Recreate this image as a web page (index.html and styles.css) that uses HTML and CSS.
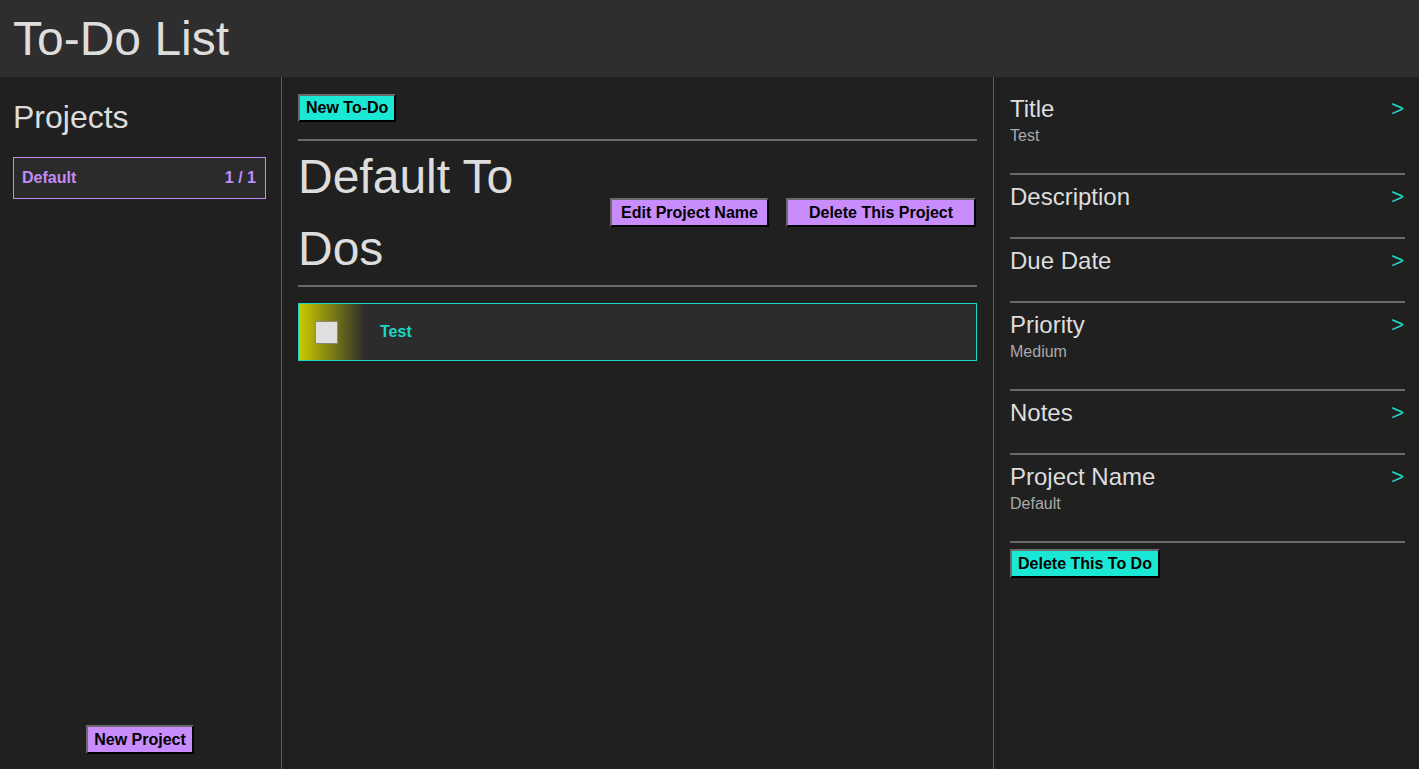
FILE: index.html
```html
<!DOCTYPE html>
<html>
<head>
<meta charset="utf-8">
<title>To-Do List</title>
<link rel="stylesheet" href="styles.css">
</head>
<body>
<header class="topbar"><h1 class="app-title">To-Do List</h1></header>
<main class="layout">
  <aside class="sidebar">
    <h2 class="side-title">Projects</h2>
    <div class="project-item"><span>Default</span><span>1 / 1</span></div>
    <button class="btn btn-purple btn-new-project">New Project</button>
  </aside>
  <section class="middle">
    <div class="middle-top"><button class="btn btn-cyan">New To-Do</button></div>
    <div class="rule rule-top"></div>
    <div class="project-head">
      <h2 class="project-name">Default To Dos</h2>
      <div class="project-actions">
        <button class="btn btn-purple btn-edit">Edit Project Name</button>
        <button class="btn btn-purple btn-delete-project">Delete This Project</button>
      </div>
    </div>
    <div class="rule"></div>
    <div class="todo">
      <span class="check"></span>
      <span class="todo-title">Test</span>
    </div>
  </section>
  <section class="details">
    <div class="field"><div class="field-head"><span class="field-label">Title</span><span class="arrow">&gt;</span></div><div class="field-value">Test</div></div>
    <div class="field"><div class="field-head"><span class="field-label">Description</span><span class="arrow">&gt;</span></div></div>
    <div class="field"><div class="field-head"><span class="field-label">Due Date</span><span class="arrow">&gt;</span></div></div>
    <div class="field"><div class="field-head"><span class="field-label">Priority</span><span class="arrow">&gt;</span></div><div class="field-value">Medium</div></div>
    <div class="field"><div class="field-head"><span class="field-label">Notes</span><span class="arrow">&gt;</span></div></div>
    <div class="field"><div class="field-head"><span class="field-label">Project Name</span><span class="arrow">&gt;</span></div><div class="field-value">Default</div></div>
    <div class="detail-actions"><button class="btn btn-cyan">Delete This To Do</button></div>
  </section>
</main>
</body>
</html>
```

FILE: styles.css
```css
* { box-sizing: border-box; }
html, body { height: 100%; }
body {
  margin: 0;
  background: #202020;
  color: #dddddd;
  font-family: "Liberation Sans", Arial, sans-serif;
  display: flex;
  flex-direction: column;
  overflow: hidden;
}
.topbar {
  height: 77px;
  flex: 0 0 77px;
  background: #2e2e2e;
  display: flex;
  align-items: center;
  padding-left: 13px;
}
.app-title {
  margin: 0;
  font-size: 48px;
  font-weight: normal;
  line-height: 55px;
  color: #dddddd;
}
.layout {
  flex: 1;
  display: grid;
  grid-template-columns: 282px 712px 1fr;
  min-height: 0;
}
.sidebar {
  border-right: 1px solid #5e5e5e;
  display: flex;
  flex-direction: column;
  padding: 22px 15px 15px 13px;
}
.side-title {
  margin: 0 0 21px;
  font-size: 32px;
  font-weight: normal;
  line-height: 37px;
}
.project-item {
  height: 42px;
  border: 1px solid #c38cf6;
  background: #2b2b2b;
  color: #c38cf6;
  font-weight: bold;
  font-size: 16px;
  display: flex;
  align-items: center;
  justify-content: space-between;
  padding: 0 9px 0 8px;
}
.btn {
  font-family: "Liberation Sans", Arial, sans-serif;
  font-weight: bold;
  font-size: 16px;
  line-height: 18px;
  color: #000;
  padding: 4px 6px 3px;
  border-style: solid;
  border-width: 2px;
  border-color: #6a6a6a #000 #000 #6a6a6a;
  cursor: pointer;
}
.btn-cyan { background: #1be8d4; }
.btn-purple { background: #c98cfd; }
.btn-new-project {
  margin-top: auto;
  align-self: center;
  margin-left: 1px;
}
.middle {
  border-right: 1px solid #5e5e5e;
  padding: 17px 16px 0 16px;
}
.middle-top .btn { padding: 3px 6px 3px; }
.rule {
  border-top: 2px solid #6a6a6a;
}
.rule-top { margin-top: 17px; }
.project-head {
  display: flex;
  align-items: center;
}
.project-name {
  margin: 0;
  width: 300px;
  font-size: 48px;
  font-weight: normal;
  line-height: 72px;
}
.project-actions {
  margin-left: auto;
  display: flex;
  gap: 17px;
  padding-right: 1px;
  margin-top: -2px;
}
.btn-edit { padding: 4px 9px 3px; }
.btn-delete-project { padding: 4px 21px 3px; }
.todo {
  margin-top: 16px;
  height: 58px;
  border: 1px solid #1fd6c2;
  background: linear-gradient(to right, #cccc00 0px, #2c2c2c 66px, #2c2c2c 100%);
  display: flex;
  align-items: center;
  padding-left: 16px;
}
.check {
  width: 23px;
  height: 23px;
  background: #e0e0e0;
  border: 1px solid #8a8a7a;
}
.todo-title {
  margin-left: 42px;
  color: #1ad8c3;
  font-weight: bold;
  font-size: 16px;
}
.details {
  padding: 10px 14px 0 16px;
}
.field {
  padding: 9px 0 27px;
  border-bottom: 2px solid #6a6a6a;
}
.field-head {
  display: flex;
  justify-content: space-between;
  align-items: center;
  line-height: 26px;
}
.field-label {
  font-size: 24px;
  color: #dddddd;
}
.arrow {
  color: #1ad8c3;
  font-size: 22px;
  margin-right: 1px;
}
.field-value {
  font-size: 16px;
  line-height: 20px;
  margin-top: 4px;
  color: #aaaaaa;
}
.detail-actions {
  padding-top: 6px;
}
```
